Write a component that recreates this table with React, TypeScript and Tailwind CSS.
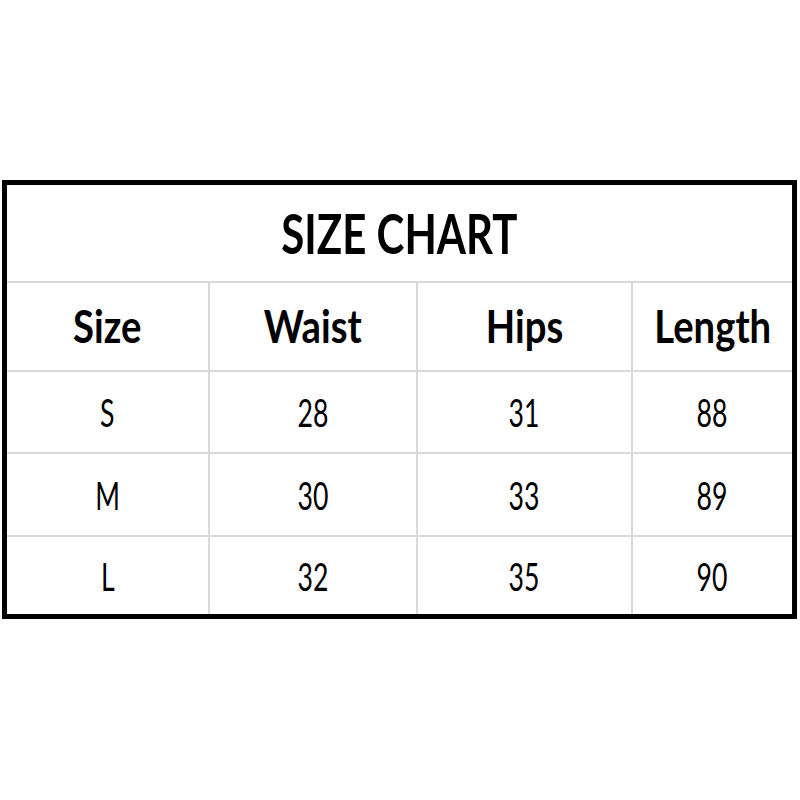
import React from 'react';

const headers = ['Size', 'Waist', 'Hips', 'Length'];

const rows = [
  { size: 'S', waist: '28', hips: '31', length: '88', h: 'h-[82px]' },
  { size: 'M', waist: '30', hips: '33', length: '89', h: 'h-[83px]' },
  { size: 'L', waist: '32', hips: '35', length: '90', h: 'h-[77px]' },
];

const cols = 'grid grid-cols-[203px_208px_215px_159px]';

export default function App() {
  return (
    <div className="min-h-[800px] w-[800px] bg-white pt-[180px] text-black" style={{ fontFamily: 'Lato, "Open Sans", sans-serif' }}>
      <div className="ml-[2px] w-[795px] border-[5px] border-black">
        <div className="flex h-[98px] items-center justify-center border-b-2 border-[#d9d9d9]">
          <span className="inline-block scale-x-75 text-[56px] font-bold leading-none">SIZE CHART</span>
        </div>

        <div className={`${cols} h-[89px] border-b-2 border-[#d9d9d9]`}>
          {headers.map((label, i) => (
            <div
              key={label}
              className={`flex items-center justify-center ${i < 3 ? 'border-r-2 border-[#d9d9d9]' : ''}`}
            >
              <span className="inline-block scale-x-85 text-[45px] font-bold leading-none">{label}</span>
            </div>
          ))}
        </div>

        {rows.map((r, ri) => (
          <div
            key={r.size}
            className={`${cols} ${r.h} ${ri < rows.length - 1 ? 'border-b-2 border-[#d9d9d9]' : ''}`}
          >
            {[r.size, r.waist, r.hips, r.length].map((v, i) => (
              <div
                key={i}
                className={`flex items-center justify-center ${i < 3 ? 'border-r-2 border-[#d9d9d9]' : ''}`}
              >
                <span className="inline-block scale-x-70 text-[38px] leading-none">{v}</span>
              </div>
            ))}
          </div>
        ))}
      </div>
    </div>
  );
}
